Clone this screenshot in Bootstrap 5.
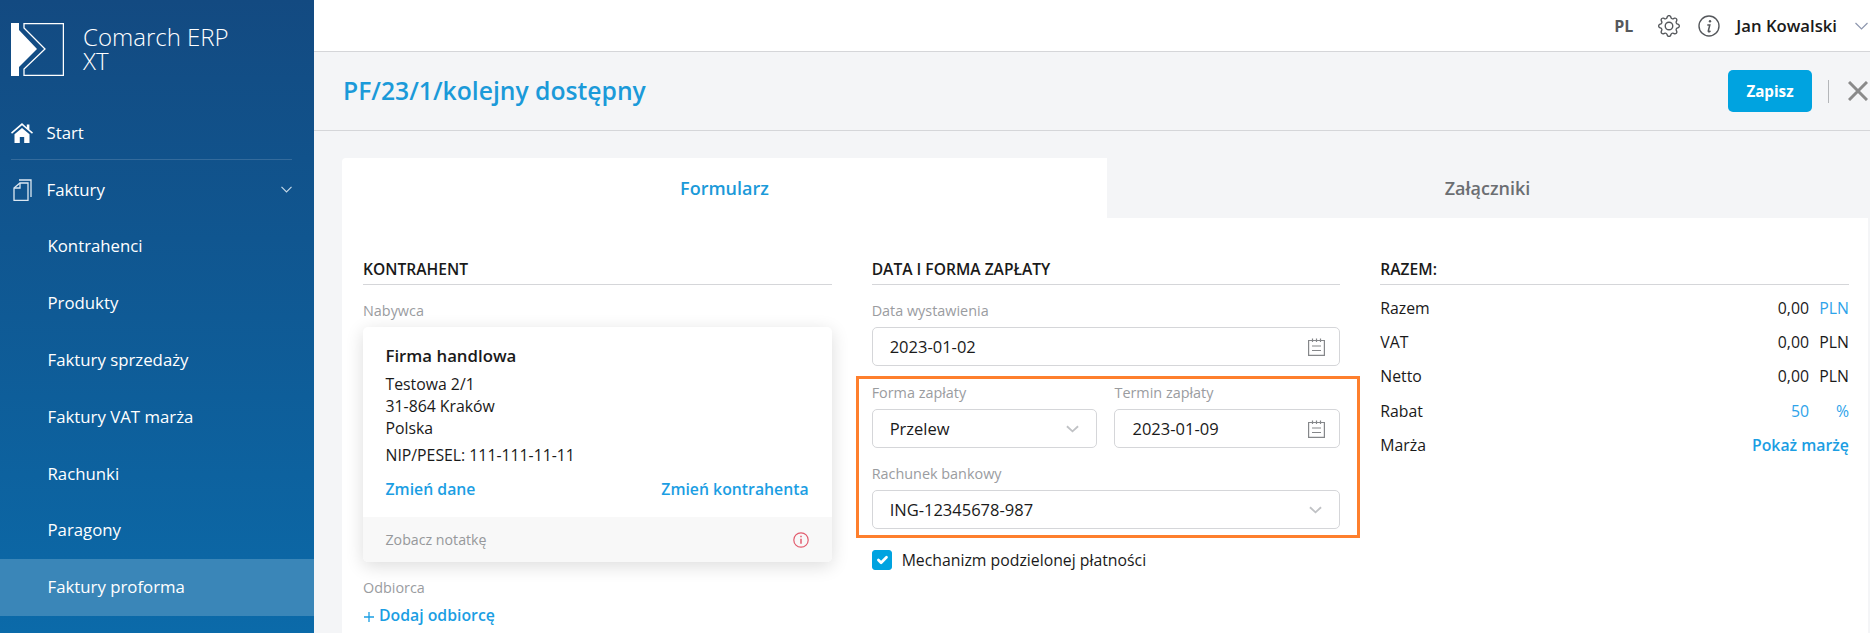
<!DOCTYPE html>
<html lang="pl">
<head>
    <meta charset="UTF-8">
    <meta name="viewport" content="width=device-width, initial-scale=1.0">
    <title>Comarch ERP XT</title>
    <link href="https://cdn.jsdelivr.net/npm/bootstrap@5.3.0/dist/css/bootstrap.min.css" rel="stylesheet">
    <style>
        html, body {
            height: 100%;
            overflow: hidden;
        }
        body {
            font-family: "Open Sans", "Liberation Sans", sans-serif;
            font-size: 15.8px;
            line-height: 22px;
            color: #1a1a1a;
            background-color: #f4f5f7;
        }
        a {
            text-decoration: none;
        }
        .app-shell {
            height: 633px;
        }

        /* menu boczne */
        .side-menu {
            width: 314px;
            flex-shrink: 0;
            color: #fff;
            background: linear-gradient(180deg, #134a81 0%, #0b6aa9 100%);
        }
        .brand-box {
            height: 105px;
            padding: 23px 0 0 11px;
            gap: 19px;
        }
        .brand-name {
            font-size: 24px;
            font-weight: 300;
            line-height: 24px;
            padding-top: 2px;
        }
        .side-menu .nav-link {
            height: 56.8px;
            padding: 0 22px 0 47.5px;
            color: #fff;
            font-size: 16.8px;
            display: flex;
            align-items: center;
            justify-content: space-between;
            position: relative;
        }
        .side-menu .nav-link.active {
            background-color: #3a86b8;
        }
        .menu-top {
            padding-left: 46.5px !important;
        }
        .menu-divider {
            height: 1px;
            margin: -2.5px 22px 1px 11px;
            background-color: rgba(255, 255, 255, .15);
        }
        .menu-icon {
            position: absolute;
            left: 11px;
            top: 50%;
            transform: translateY(-50%);
        }

        /* gorny pasek */
        .top-strip {
            height: 52px;
            background-color: #fff;
            border-bottom: 1px solid #d5d6d9;
            padding-right: 2px;
        }
        .lang-code {
            font-size: 16px;
            font-weight: 700;
            color: #55585c;
            margin-right: 25px;
        }
        .gear-icon {
            margin-right: 18px;
        }
        .user-name {
            font-size: 16.7px;
            font-weight: 600;
            color: #1a1a1a;
            margin: 0 18px 0 16px;
        }
        .title-strip {
            height: 79px;
            padding-left: 29px;
            border-bottom: 1px solid #d5d6d9;
        }
        .doc-title {
            font-size: 24.7px;
            font-weight: 600;
            line-height: 32px;
            color: #1b9ad9;
            margin: 0;
        }
        .save-btn {
            width: 84px;
            height: 42px;
            padding: 0;
            font-size: 15.2px;
            font-weight: 700;
            color: #fff;
            background-color: #00a3e0;
            border: 0;
            border-radius: 5px;
        }
        .title-sep {
            width: 1px;
            height: 23px;
            margin: 0 19px 0 16px;
            background-color: #b4b6b9;
        }
        .close-icon {
            margin-right: 2px;
        }

        /* zakladki */
        .content-wrap {
            padding: 27px 2px 0 28px;
        }
        .tab-strip {
            height: 60px;
            border: 0;
        }
        .tab-strip .nav-link {
            height: 60px;
            display: flex;
            align-items: center;
            justify-content: center;
            font-size: 18px;
            font-weight: 600;
            color: #6b6e72;
            background: transparent;
            border: 0;
            border-radius: 0;
        }
        .tab-strip .nav-item:first-child {
            flex: 0 0 765px;
        }
        .tab-strip .nav-item:last-child {
            flex: 1 1 auto;
        }
        .tab-strip .nav-link.active {
            color: #1b9ad9;
            background-color: #fff;
            border-top-left-radius: 4px;
        }
        .form-sheet {
            background-color: #fff;
            padding: 0 19px 0 21px;
            height: 416px;
        }
        .form-columns {
            --bs-gutter-x: 40px;
        }
        .block-title {
            font-size: 15.6px;
            font-weight: 600;
            line-height: 20px;
            margin: 0;
            padding: 41px 0 5px;
            color: #1a1a1a;
            border-bottom: 1px solid #d5d6d9;
        }
        .field-label {
            display: block;
            font-size: 14.4px;
            line-height: 18px;
            margin: 17px 0 7px;
            color: #9a9c9f;
        }
        .field-label.first-label {
            margin-top: 0;
        }
        .field-box {
            position: relative;
        }
        .field-box .form-control,
        .field-box .form-select {
            height: 39px;
            padding: 0 17px;
            font-size: 16.5px;
            line-height: 22px;
            color: #1a1a1a;
            border: 1px solid #d5d6d9;
            border-radius: 5px;
            box-shadow: none;
        }
        .field-box .form-select {
            background-image: url("data:image/svg+xml,%3csvg xmlns='http://www.w3.org/2000/svg' viewBox='0 0 14 8'%3e%3cpath fill='none' stroke='%23c0c2c5' stroke-width='2' d='M1 1l6 5.500L13 1'/%3e%3c/svg%3e");
            background-size: 13px 8px;
            background-position: right 17px center;
        }
        .date-icon {
            position: absolute;
            right: 15px;
            top: 10px;
            pointer-events: none;
        }
        .marked-box {
            margin: 10px -20px 0 -16px;
            padding: 5px 17px 6px 13px;
            border: 3px solid #fe7f2d;
        }
        .marked-row {
            --bs-gutter-x: 17px;
        }
        .split-check {
            min-height: 20px;
            margin: 12px 0 0;
            padding-left: 30px;
            line-height: 20px;
        }
        .split-check .form-check-input {
            width: 20px;
            height: 20px;
            margin: 0 0 0 -30px;
            background-color: #00a3e0;
            border-color: #00a3e0;
            border-radius: 3px;
        }

        /* karta kontrahenta */
        .buyer-card {
            border: 0;
            border-radius: 5px;
            box-shadow: 0 4px 18px rgba(0, 0, 0, .14);
        }
        .buyer-card .card-body {
            padding: 18px 23px 17px 22.5px;
        }
        .buyer-name {
            font-size: 16.8px;
            font-weight: 600;
            margin-bottom: 6px;
        }
        .buyer-tax {
            margin-top: 5px;
        }
        .buyer-links {
            margin-top: 12px;
        }
        .blue-link {
            font-weight: 600;
            color: #1b9ee3;
        }
        .buyer-card .card-footer {
            height: 45px;
            padding: 0 23px 0 22.5px;
            font-size: 14.2px;
            color: #96989b;
            background-color: #f8f8f8;
            border: 0;
        }

        /* podsumowanie */
        .sum-list {
            margin-top: 6px;
        }
        .sum-row {
            height: 34.2px;
        }
        .sum-unit {
            width: 31px;
            margin-left: 9px;
            text-align: right;
        }
        .light-blue {
            color: #2ea3ea;
        }
    </style>
</head>
<body>

    <div class="app-shell d-flex">
        <!-- Menu boczne -->
        <aside class="side-menu">
            <div class="brand-box d-flex">
                <svg width="53" height="53" viewBox="11 23 53 53" aria-hidden="true">
                    <path fill="#fff" d="M11 23h8v7l18 19-18 18v9h-8z"/>
                    <path fill="none" stroke="#fff" stroke-width="1.3" d="M24 23.6h39.4v51.8H24V69l21-20-21-21z"/>
                </svg>
                <div class="brand-name">Comarch ERP<br>XT</div>
            </div>
            <nav class="nav flex-column">
                <a class="nav-link menu-top" href="#">
                    <svg class="menu-icon" width="22" height="20" viewBox="0 0 22 20" aria-hidden="true">
                        <path fill="#fff" d="M11 0 0 9.6l1 1.2L11 2.3l10 8.5 1-1.2-3.600-3.100V1.500h-2.600v2.900zM3.500 11.300 11 5l7.500 6.300V20h-5.300v-6H8.800v6H3.500z"/>
                    </svg>
                    Start
                </a>
                <div class="menu-divider"></div>
                <a class="nav-link menu-top" href="#">
                    <svg class="menu-icon" style="left:13px" width="19" height="22" viewBox="0 0 19 22" aria-hidden="true">
                        <path fill="none" stroke="#dce8f2" stroke-width="1.300" d="M6 1h12v17M1 9l6-5h8v17.300H1z"/>
                        <path fill="none" stroke="#dce8f2" stroke-width="1.300" d="M7 4v5H1"/>
                    </svg>
                    Faktury
                    <svg width="11" height="7" viewBox="0 0 11 7" aria-hidden="true">
                        <path fill="none" stroke="#c5d8e8" stroke-width="1.200" d="M.5.800l5 5 5-5"/>
                    </svg>
                </a>
                <a class="nav-link" href="#">Kontrahenci</a>
                <a class="nav-link" href="#">Produkty</a>
                <a class="nav-link" href="#">Faktury sprzedaży</a>
                <a class="nav-link" href="#">Faktury VAT marża</a>
                <a class="nav-link" href="#">Rachunki</a>
                <a class="nav-link" href="#">Paragony</a>
                <a class="nav-link active" href="#">Faktury proforma</a>
            </nav>
        </aside>

        <main class="flex-grow-1">
            <!-- Gorny pasek -->
            <div class="top-strip d-flex align-items-center justify-content-end">
                <span class="lang-code">PL</span>
                <svg class="gear-icon" width="22" height="22" viewBox="0 0 16 16" fill="#55585c" aria-hidden="true">
                    <path d="M8 4.754a3.246 3.246 0 1 0 0 6.492 3.246 3.246 0 0 0 0-6.492zM5.754 8a2.246 2.246 0 1 1 4.492 0 2.246 2.246 0 0 1-4.492 0z"/>
                    <path d="M9.796 1.343c-.527-1.79-3.065-1.79-3.592 0l-.094.319a.873.873 0 0 1-1.255.52l-.292-.16c-1.64-.892-3.433.902-2.54 2.541l.159.292a.873.873 0 0 1-.52 1.255l-.319.094c-1.79.527-1.79 3.065 0 3.592l.319.094a.873.873 0 0 1 .52 1.255l-.16.292c-.892 1.64.901 3.434 2.541 2.54l.292-.159a.873.873 0 0 1 1.255.52l.094.319c.527 1.79 3.065 1.79 3.592 0l.094-.319a.873.873 0 0 1 1.255-.52l.292.16c1.64.893 3.434-.902 2.54-2.541l-.159-.292a.873.873 0 0 1 .52-1.255l.319-.094c1.79-.527 1.79-3.065 0-3.592l-.319-.094a.873.873 0 0 1-.52-1.255l.16-.292c.893-1.64-.902-3.433-2.541-2.54l-.292.159a.873.873 0 0 1-1.255-.52l-.094-.319zm-2.633.283c.246-.835 1.428-.835 1.674 0l.094.319a1.873 1.873 0 0 0 2.693 1.115l.291-.16c.764-.415 1.6.42 1.184 1.185l-.159.292a1.873 1.873 0 0 0 1.116 2.692l.318.094c.835.246.835 1.428 0 1.674l-.319.094a1.873 1.873 0 0 0-1.115 2.693l.16.291c.415.764-.42 1.6-1.185 1.184l-.291-.159a1.873 1.873 0 0 0-2.693 1.116l-.094.318c-.246.835-1.428.835-1.674 0l-.094-.319a1.873 1.873 0 0 0-2.692-1.115l-.292.16c-.764.415-1.6-.42-1.184-1.185l.159-.291A1.873 1.873 0 0 0 1.945 8.93l-.319-.094c-.835-.246-.835-1.428 0-1.674l.319-.094A1.873 1.873 0 0 0 3.06 4.377l-.16-.292c-.415-.764.42-1.6 1.185-1.184l.292.159a1.873 1.873 0 0 0 2.692-1.115l.094-.319z"/>
                </svg>
                <svg width="22" height="22" viewBox="0 0 22 22" aria-hidden="true">
                    <circle cx="11" cy="11" r="10" fill="none" stroke="#55585c" stroke-width="1.400"/>
                    <circle cx="12" cy="6.300" r="1.200" fill="#55585c"/>
                    <path fill="none" stroke="#55585c" stroke-width="1.500" d="M9.300 10h2.500l-1.500 6q-.200 1 1 .700l1.200-.700"/>
                </svg>
                <span class="user-name">Jan Kowalski</span>
                <svg width="13" height="8" viewBox="0 0 13 8" aria-hidden="true">
                    <path fill="none" stroke="#8d97ae" stroke-width="1.200" d="M.5 1l6 6 6-6"/>
                </svg>
            </div>

            <!-- Tytul dokumentu -->
            <div class="title-strip d-flex align-items-center justify-content-between">
                <h1 class="doc-title">PF/23/1/kolejny dostępny</h1>
                <div class="d-flex align-items-center">
                    <button type="button" class="btn save-btn">Zapisz</button>
                    <span class="title-sep"></span>
                    <svg class="close-icon" width="20" height="20" viewBox="0 0 20 20" aria-hidden="true">
                        <path stroke="#8a8a8a" stroke-width="3" d="M1 1l18 18M19 1 1 19"/>
                    </svg>
                </div>
            </div>

            <div class="content-wrap">
                <ul class="nav tab-strip">
                    <li class="nav-item"><a class="nav-link active" href="#">Formularz</a></li>
                    <li class="nav-item"><a class="nav-link" href="#">Załączniki</a></li>
                </ul>

                <div class="form-sheet">
                    <div class="row form-columns">
                        <!-- Kontrahent -->
                        <div class="col-4">
                            <h2 class="block-title">KONTRAHENT</h2>
                            <label class="field-label">Nabywca</label>
                            <div class="card buyer-card">
                                <div class="card-body">
                                    <div class="buyer-name">Firma handlowa</div>
                                    <div>Testowa 2/1<br>31-864 Kraków<br>Polska</div>
                                    <div class="buyer-tax">NIP/PESEL: 111-111-11-11</div>
                                    <div class="buyer-links d-flex justify-content-between">
                                        <a class="blue-link" href="#">Zmień dane</a>
                                        <a class="blue-link" href="#">Zmień kontrahenta</a>
                                    </div>
                                </div>
                                <div class="card-footer d-flex align-items-center justify-content-between">
                                    Zobacz notatkę
                                    <svg width="16" height="16" viewBox="0 0 16 16" aria-hidden="true">
                                        <circle cx="8" cy="8" r="7.200" fill="none" stroke="#e25c6e" stroke-width="1.200"/>
                                        <path stroke="#e25c6e" stroke-width="1.500" d="M8 6.800v5M8 3.800v1.500"/>
                                    </svg>
                                </div>
                            </div>
                            <label class="field-label">Odbiorca</label>
                            <a class="blue-link" href="#">
                                <svg class="me-1" width="12" height="12" viewBox="0 0 12 12" aria-hidden="true">
                                    <path stroke="#1b9ee3" stroke-width="1.300" d="M6 1v10M1 6h10"/>
                                </svg>Dodaj odbiorcę
                            </a>
                        </div>

                        <!-- Data i forma zaplaty -->
                        <div class="col-4">
                            <h2 class="block-title">DATA I FORMA ZAPŁATY</h2>
                            <label class="field-label">Data wystawienia</label>
                            <div class="field-box">
                                <input type="text" class="form-control" value="2023-01-02">
                                <svg class="date-icon" width="17" height="19" viewBox="0 0 17 19" aria-hidden="true">
                                    <path fill="none" stroke="#85878a" stroke-width="1.200" d="M.6 3.500h15.800v14.900H.6zM4.500 1.500v3.500M8.500 1.500v3.500M12.500 1.500v3.500M4 9h9M4 13.500h9"/>
                                </svg>
                            </div>
                            <div class="marked-box">
                                <div class="row marked-row">
                                    <div class="col-6">
                                        <label class="field-label first-label">Forma zapłaty</label>
                                        <div class="field-box">
                                            <select class="form-select"><option>Przelew</option></select>
                                        </div>
                                    </div>
                                    <div class="col-6">
                                        <label class="field-label first-label">Termin zapłaty</label>
                                        <div class="field-box">
                                            <input type="text" class="form-control" value="2023-01-09">
                                            <svg class="date-icon" width="17" height="19" viewBox="0 0 17 19" aria-hidden="true">
                                                <path fill="none" stroke="#85878a" stroke-width="1.200" d="M.6 3.500h15.800v14.900H.6zM4.500 1.500v3.500M8.500 1.500v3.500M12.500 1.500v3.500M4 9h9M4 13.500h9"/>
                                            </svg>
                                        </div>
                                    </div>
                                </div>
                                <label class="field-label">Rachunek bankowy</label>
                                <div class="field-box">
                                    <select class="form-select"><option>ING-12345678-987</option></select>
                                </div>
                            </div>
                            <div class="form-check split-check">
                                <input class="form-check-input" type="checkbox" id="splitPayment" checked>
                                <label class="form-check-label" for="splitPayment">Mechanizm podzielonej płatności</label>
                            </div>
                        </div>

                        <!-- Razem -->
                        <div class="col-4">
                            <h2 class="block-title">RAZEM:</h2>
                            <div class="sum-list">
                                <div class="sum-row d-flex align-items-center justify-content-between">
                                    <span>Razem</span>
                                    <span class="d-flex"><span>0,00</span><span class="sum-unit light-blue">PLN</span></span>
                                </div>
                                <div class="sum-row d-flex align-items-center justify-content-between">
                                    <span>VAT</span>
                                    <span class="d-flex"><span>0,00</span><span class="sum-unit">PLN</span></span>
                                </div>
                                <div class="sum-row d-flex align-items-center justify-content-between">
                                    <span>Netto</span>
                                    <span class="d-flex"><span>0,00</span><span class="sum-unit">PLN</span></span>
                                </div>
                                <div class="sum-row d-flex align-items-center justify-content-between">
                                    <span>Rabat</span>
                                    <span class="d-flex light-blue"><span>50</span><span class="sum-unit">%</span></span>
                                </div>
                                <div class="sum-row d-flex align-items-center justify-content-between">
                                    <span>Marża</span>
                                    <a class="blue-link" href="#">Pokaż marżę</a>
                                </div>
                            </div>
                        </div>
                    </div>
                </div>
            </div>
        </main>
    </div>

    <script src="https://cdn.jsdelivr.net/npm/bootstrap@5.3.0/dist/js/bootstrap.bundle.min.js"></script>
</body>
</html>
